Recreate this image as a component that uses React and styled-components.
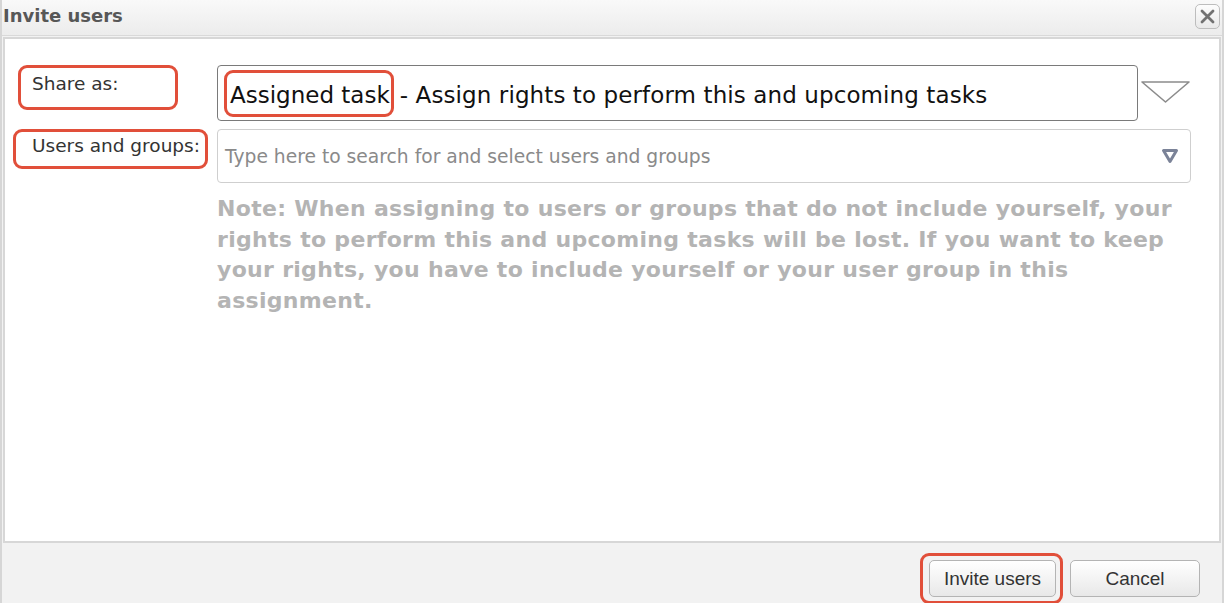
import React from 'react';
import styled, { createGlobalStyle } from 'styled-components';

const GlobalStyle = createGlobalStyle`
  html, body {
    margin: 0;
    padding: 0;
    background: #f2f2f2;
  }
  #root {
    height: 100vh;
  }
`;

const MARK = '#e14f3a';

const Window = styled.div`
  height: 100vh;
  box-sizing: border-box;
  display: flex;
  flex-direction: column;
  background: #f2f2f2;
  border-left: 2px solid #d6d6d6;
  border-right: 2px solid #d6d6d6;
  font-family: "DejaVu Sans", Verdana, sans-serif;
  overflow: hidden;
`;

const TitleBar = styled.div`
  height: 36px;
  box-sizing: border-box;
  flex-shrink: 0;
  display: flex;
  align-items: center;
  justify-content: space-between;
  padding: 0 2px 4px 1px;
  background: linear-gradient(#f9f9f9, #ececec);
  border-bottom: 1px solid #d9d9d9;
`;

const Title = styled.div`
  font-weight: bold;
  font-size: 18px;
  color: #575757;
`;

const CloseButton = styled.button`
  width: 25px;
  height: 25px;
  margin-top: 2px;
  padding: 0;
  display: flex;
  align-items: center;
  justify-content: center;
  border: 1px solid #bdbdbd;
  border-radius: 5px;
  background: linear-gradient(#fdfdfd, #e9e9e9);
`;

const Panel = styled.div`
  flex: 1;
  margin: 1px 1px 0 1px;
  background: #fff;
  border: 2px solid #d7d7d7;
  display: grid;
  grid-template-columns: 212px 974px;
  grid-auto-rows: min-content;
  row-gap: 8px;
  align-content: start;
  padding-top: 26px;
`;

const LabelCell = styled.div`
  padding-left: ${(p) => p.$inset}px;
`;

const Label = styled.div`
  box-sizing: border-box;
  width: ${(p) => p.$w}px;
  height: ${(p) => p.$h}px;
  padding: ${(p) => p.$top}px 0 0 ${(p) => p.$left}px;
  border: 3px solid ${MARK};
  border-radius: 9px;
  font-size: 18.5px;
  color: #333;
  white-space: nowrap;
`;

const SelectRow = styled.div`
  display: flex;
  align-items: flex-start;
  height: 56px;
`;

const Select = styled.div`
  flex: 1;
  height: 56px;
  box-sizing: border-box;
  border: 1px solid #7a7a7a;
  border-radius: 4px;
  display: flex;
  align-items: center;
  padding: 3px 0 0 6px;
  font-size: 23px;
  letter-spacing: 0.1px;
  color: #111;
  white-space: nowrap;
`;

const Mark = styled.span`
  display: inline-flex;
  align-items: center;
  height: 47px;
  margin-top: -3px;
  box-sizing: border-box;
  padding: 3px 1px 0 3px;
  margin-right: 6px;
  letter-spacing: 0;
  border: 3px solid ${MARK};
  border-radius: 9px;
`;

const Arrow = styled.svg`
  margin: 14px 0 0 2px;
  flex-shrink: 0;
`;

const SearchBox = styled.div`
  height: 54px;
  box-sizing: border-box;
  border: 1px solid #cfcfcf;
  border-radius: 4px;
  display: flex;
  align-items: center;
  justify-content: space-between;
  padding: 0 11px 0 7px;
  font-size: 18.7px;
  color: #8a8a8a;
  white-space: nowrap;
`;

const Note = styled.div`
  grid-column: 2;
  margin-top: 3px;
  font-weight: bold;
  font-size: 22px;
  letter-spacing: 0.3px;
  line-height: 30.5px;
  color: #b4b4b4;
  white-space: nowrap;
`;

const Footer = styled.div`
  height: 60px;
  box-sizing: border-box;
  flex-shrink: 0;
  display: flex;
  justify-content: flex-end;
  align-items: flex-start;
  gap: 7px;
  padding: 10px 22px 0 0;
`;

const Highlight = styled.div`
  padding: 4px 4px 4px 6px;
  border: 3px solid ${MARK};
  border-radius: 9px;
`;

const Button = styled.button`
  display: block;
  width: ${(p) => p.$w}px;
  height: 37px;
  margin-top: ${(p) => p.$top || 0}px;
  border: 1px solid #b4b4b4;
  border-radius: 5px;
  background: linear-gradient(#ffffff, #e8e8e8);
  font-family: "Liberation Sans", Arial, sans-serif;
  font-size: 19px;
  color: #333;
  padding: 0;
`;

export default function App() {
  return (
    <>
      <GlobalStyle />
      <Window>
        <TitleBar>
          <Title>Invite users</Title>
          <CloseButton aria-label="Close">
            <svg width="17" height="17" viewBox="0 0 17 17">
              <path d="M3 3 L14 14 M14 3 L3 14" stroke="#727272" strokeWidth="2.8" strokeLinecap="round" />
            </svg>
          </CloseButton>
        </TitleBar>

        <Panel>
          <LabelCell $inset={13}>
            <Label $w={160} $h={45} $top={5} $left={11}>Share as:</Label>
          </LabelCell>
          <SelectRow>
            <Select>
              <Mark>Assigned task</Mark>- Assign rights to perform this and upcoming tasks
            </Select>
            <Arrow width="51" height="25" viewBox="0 0 51 25">
              <path d="M2 3 L49 3 L25.5 23 Z" fill="none" stroke="#8c8c8c" strokeWidth="1.6" strokeLinejoin="round" />
            </Arrow>
          </SelectRow>

          <LabelCell $inset={8}>
            <Label $w={195} $h={40} $top={3} $left={16}>Users and groups:</Label>
          </LabelCell>
          <SearchBox>
            Type here to search for and select users and groups
            <svg width="18" height="16" viewBox="0 0 18 16">
              <path d="M2.5 2.5 L15.5 2.5 L9 13.5 Z" fill="none" stroke="#7b8398" strokeWidth="3" strokeLinejoin="round" />
            </svg>
          </SearchBox>

          <Note>
            Note: When assigning to users or groups that do not include yourself, your<br />
            rights to perform this and upcoming tasks will be lost. If you want to keep<br />
            your rights, you have to include yourself or your user group in this<br />
            assignment.
          </Note>
        </Panel>

        <Footer>
          <Highlight>
            <Button $w={127}>Invite users</Button>
          </Highlight>
          <Button $w={130} $top={7}>Cancel</Button>
        </Footer>
      </Window>
    </>
  );
}
